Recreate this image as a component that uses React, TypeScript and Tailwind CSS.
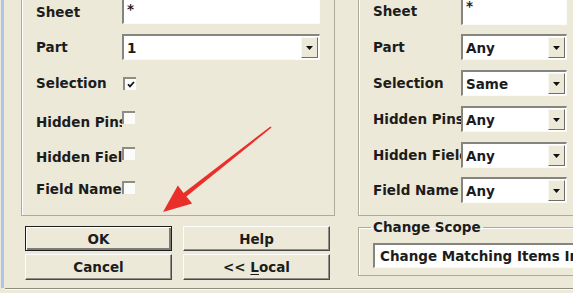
import React from 'react';

const sunken =
  'border-t-2 border-l-2 border-b border-r border-t-[#85847e] border-l-[#85847e] border-b-[#fbfbf8] border-r-[#fbfbf8] bg-white';

const etched = 'border border-[#aeab9c] shadow-[inset_1px_1px_0_#ffffff]';

const DropArrow = () => (
  <div className="w-[17px] my-[1px] mr-[1px] flex items-center justify-center bg-[#ece9d8] border border-t-[#f8f7f2] border-l-[#f8f7f2] border-r-[#6e6d66] border-b-[#6e6d66]">
    <svg width="7" height="4" viewBox="0 0 7 4">
      <path d="M0 0h7L3.5 4z" fill="#111" />
    </svg>
  </div>
);

const Select = ({ value, width }: { value: string; width: string }) => (
  <div className={`h-[26px] ${width} shrink-0 flex items-stretch ${sunken}`}>
    <span className="flex-1 pl-[3px] flex items-center whitespace-nowrap overflow-hidden">{value}</span>
    <DropArrow />
  </div>
);

const Check = ({ checked, top }: { checked?: boolean; top: string }) => (
  <div
    className={`self-start ${top} w-[13px] h-[13px] shrink-0 flex items-center justify-center bg-[#fbfbf9] border-t-2 border-l-2 border-t-[#8d8c86] border-l-[#8d8c86]`}
  >
    {checked && (
      <svg width="8" height="7" viewBox="0 0 8 7">
        <path d="M1 3.2l2 2.2L7 1" stroke="#111" strokeWidth="1.7" fill="none" />
      </svg>
    )}
  </div>
);

const Label = ({ text, width }: { text: string; width: string }) => (
  <span className={`${width} shrink-0 whitespace-nowrap overflow-hidden`}>{text}</span>
);

const Button = ({ children, isDefault }: { children: React.ReactNode; isDefault?: boolean }) => (
  <div
    className={`flex items-center justify-center bg-[#ece9d8] ${
      isDefault
        ? 'border border-[#1d1d1d] shadow-[inset_1px_1px_0_#ffffff,inset_-2px_-2px_0_#7c7b75]'
        : 'border border-t-[#fdfdfb] border-l-[#fdfdfb] border-r-[#4a4944] border-b-[#4a4944] shadow-[inset_-1px_-1px_0_#8f8e88]'
    }`}
  >
    {children}
  </div>
);

export default function App() {
  return (
    <div className="w-[573px] h-[293px] overflow-hidden relative bg-[#ece9d8] flex flex-col font-['DejaVu_Sans',sans-serif] font-bold text-[13.5px] leading-[16px] text-[#1c1c1c]">
      <div className="h-[288px] flex shrink-0">
        <div className="w-[3px] ml-[1px] shrink-0 bg-[#aec4ec]" />
        <div className="flex flex-col shrink-0 pl-[17px] -mt-[7px]">
          {/* match criteria boxes */}
          <div className="flex gap-[23px]">
            <div className={`w-[314px] shrink-0 ${etched} border-t-0 pl-[14px] pb-[9px] flex flex-col`}>
              <div className="h-[37px] flex items-center">
                <Label text="Sheet" width="w-[86px]" />
                <div className={`self-start h-[31px] w-[198px] pl-[3px] pt-[6px] ${sunken}`}>*</div>
              </div>
              <div className="h-[34px] flex items-center">
                <Label text="Part" width="w-[86px]" />
                <Select value="1" width="w-[198px]" />
              </div>
              <div className="h-[38px] flex items-center">
                <Label text="Selection" width="w-[87px]" />
                <Check checked top="mt-[13px]" />
              </div>
              <div className="h-[40px] flex items-center">
                <Label text="Hidden Pins" width="w-[86px]" />
                <Check top="mt-[9px]" />
              </div>
              <div className="h-[30px] flex items-center">
                <Label text="Hidden Fields" width="w-[86px]" />
                <Check top="mt-[5px]" />
              </div>
              <div className="h-[34px] flex items-center">
                <Label text="Field Name" width="w-[86px]" />
                <Check top="mt-[9px]" />
              </div>
            </div>

            <div className={`w-[240px] shrink-0 ${etched} border-t-0 pl-[14px] pb-[8px] flex flex-col`}>
              <div className="h-[36px] flex items-center">
                <Label text="Sheet" width="w-[88px]" />
                <div className={`self-start h-[32px] w-[106px] pl-[3px] pt-[3px] ${sunken}`}>*</div>
              </div>
              <div className="h-[36px] flex items-center">
                <Label text="Part" width="w-[88px]" />
                <Select value="Any" width="w-[106px]" />
              </div>
              <div className="h-[36px] flex items-center">
                <Label text="Selection" width="w-[88px]" />
                <Select value="Same" width="w-[106px]" />
              </div>
              <div className="h-[36px] flex items-center">
                <Label text="Hidden Pins" width="w-[88px]" />
                <Select value="Any" width="w-[106px]" />
              </div>
              <div className="h-[36px] flex items-center">
                <Label text="Hidden Fields" width="w-[88px]" />
                <Select value="Any" width="w-[106px]" />
              </div>
              <div className="h-[34px] flex items-center">
                <Label text="Field Name" width="w-[88px]" />
                <Select value="Any" width="w-[106px]" />
              </div>
            </div>
          </div>

          {/* buttons + change scope */}
          <div className="flex items-start mt-[4px]">
            <div className="ml-[4px] mt-[6px] grid grid-cols-[147px_147px] grid-rows-[25px_26px] gap-x-[11px] gap-y-[3px]">
              <Button isDefault>OK</Button>
              <Button>Help</Button>
              <Button>Cancel</Button>
              <Button>
                <span className="whitespace-pre">
                  {'<< '}
                  <span className="underline underline-offset-2">L</span>ocal
                </span>
              </Button>
            </div>
            <fieldset className={`ml-[28px] w-[240px] shrink-0 ${etched} pl-[12px] pb-[7px]`}>
              <legend className="px-[2px] leading-[15px]">Change Scope</legend>
              <div className={`ml-[2px] mt-[8px] h-[25px] w-[240px] pl-[5px] flex items-center whitespace-nowrap ${sunken}`}>
                Change Matching Items In Current Document
              </div>
            </fieldset>
          </div>
        </div>
      </div>
      <div className="ml-[5px] h-px bg-[#8e8c80] shrink-0" />
      <div className="ml-[5px] h-px bg-[#fbfaf5] shrink-0" />

      {/* red annotation arrow */}
      <svg className="absolute left-0 top-0 pointer-events-none" width="573" height="293" viewBox="0 0 573 293">
        <polygon
          points="271.6,127.6 186.4,196.4 192.2,203.6 163,212 177.8,185.6 183.6,193 270.4,126.4"
          fill="#ea2f2a"
        />
      </svg>
    </div>
  );
}
